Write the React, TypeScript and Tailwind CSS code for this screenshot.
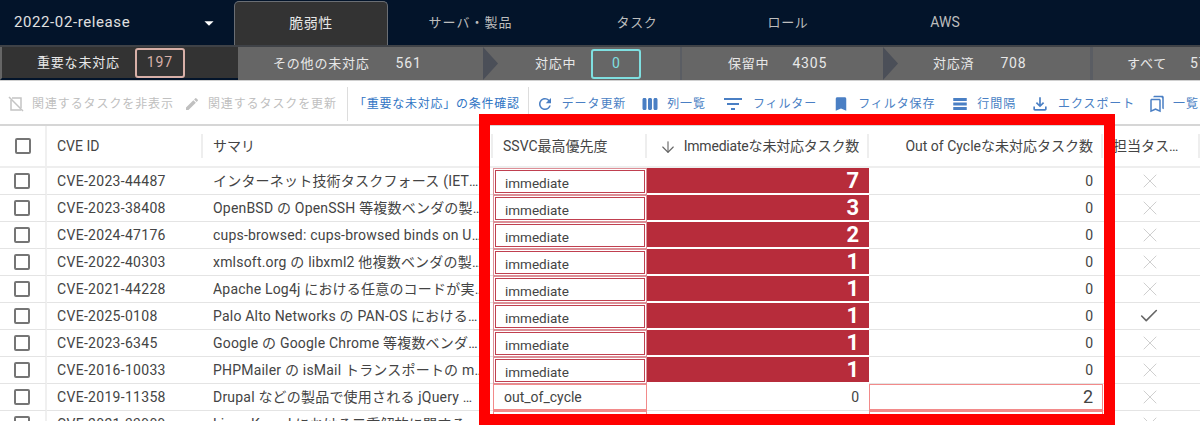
import type { ReactNode } from 'react';
import { ArrowDown, Check, X } from 'lucide-react';
import {
  MdArrowDropDown,
  MdBookmark,
  MdEdit,
  MdFilterList,
  MdOutlineBookmarks,
  MdOutlineFileDownload,
  MdRefresh,
  MdTableRows,
  MdViewWeek,
} from 'react-icons/md';

interface Row {
  id: string;
  summary: string;
  ssvc: string;
  immediate: number;
  outOfCycle: number;
  assigned?: boolean;
}

const ROWS: Row[] = [
  { id: 'CVE-2023-44487', summary: 'インターネット技術タスクフォース (IETF) の HTTP/2', ssvc: 'immediate', immediate: 7, outOfCycle: 0 },
  { id: 'CVE-2023-38408', summary: 'OpenBSD の OpenSSH 等複数ベンダの製品における', ssvc: 'immediate', immediate: 3, outOfCycle: 0 },
  { id: 'CVE-2024-47176', summary: 'cups-browsed: cups-browsed binds on UDP INADDR_ANY', ssvc: 'immediate', immediate: 2, outOfCycle: 0 },
  { id: 'CVE-2022-40303', summary: 'xmlsoft.org の libxml2 他複数ベンダの製品における', ssvc: 'immediate', immediate: 1, outOfCycle: 0 },
  { id: 'CVE-2021-44228', summary: 'Apache Log4j における任意のコードが実行される脆弱性', ssvc: 'immediate', immediate: 1, outOfCycle: 0 },
  { id: 'CVE-2025-0108', summary: 'Palo Alto Networks の PAN-OS における認証欠如の脆弱性', ssvc: 'immediate', immediate: 1, outOfCycle: 0, assigned: true },
  { id: 'CVE-2023-6345', summary: 'Google の Google Chrome 等複数ベンダの製品における', ssvc: 'immediate', immediate: 1, outOfCycle: 0 },
  { id: 'CVE-2016-10033', summary: 'PHPMailer の isMail トランスポートの mail 関数における', ssvc: 'immediate', immediate: 1, outOfCycle: 0 },
  { id: 'CVE-2019-11358', summary: 'Drupal などの製品で使用される jQuery におけるプロトタイプ', ssvc: 'out_of_cycle', immediate: 0, outOfCycle: 2 },
  { id: 'CVE-2021-33909', summary: 'Linux Kernel における二重解放に関する脆弱性', ssvc: 'out_of_cycle', immediate: 0, outOfCycle: 1 },
];

const GRID = 'grid grid-cols-[47px_156px_290px_154px_222px_234px_97px]';

function Checkbox() {
  return <div className="w-[16px] h-[16px] rounded-[2px] border-2 border-[#757575] bg-white" />;
}

function HideIcon() {
  return (
    <svg width="16" height="16" viewBox="0 0 16 16" fill="none" stroke="#c4c4c4" strokeWidth="1.5">
      <path d="M4 2h9v10M13 14H3V4" />
      <path d="M1 1l14 14" />
    </svg>
  );
}

function Arrow() {
  return (
    <div className="w-[16px] h-full shrink-0 bg-[#666666]">
      <svg width="16" height="33" viewBox="0 0 16 33" className="block">
        <path d="M0 0l15 16.5L0 33z" fill="#4b4f58" />
      </svg>
    </div>
  );
}

function Tool({ icon, label, disabled, gap }: { icon: ReactNode; label: string; disabled?: boolean; gap: string }) {
  return (
    <div className={`flex items-center shrink-0 whitespace-nowrap ${gap} ${disabled ? 'text-[#c0c0c0]' : 'text-[#4a7fc4]'}`}>
      <span className="w-[16px] flex justify-center">{icon}</span>
      <span className="text-[12px] tracking-[0.9px]">{label}</span>
    </div>
  );
}

function HeaderCell({ children, className = '' }: { children: ReactNode; className?: string }) {
  return (
    <div className={`relative flex items-center pt-[1px] text-[14px] text-[#444444] whitespace-nowrap px-[10px] ${className}`}>
      {children}
      <span className="absolute right-0 top-[8px] h-[24px] w-[2px] bg-[#eeeeee]" />
    </div>
  );
}

export default function App() {
  return (
    <div className="relative w-[1200px] h-[426px] overflow-hidden bg-white font-['Roboto','Noto_Sans_CJK_JP',sans-serif]">
      {/* Top nav */}
      <div className="h-[45px] bg-[#03142a] flex">
        <div className="w-[234px] flex items-center pl-[14px] pr-[14px] justify-between text-[#e0e0e0] text-[15px] tracking-[0.6px]">
          2022-02-release
          <MdArrowDropDown size={22} className="text-white shrink-0" />
        </div>
        <div className="w-[154px] mt-[1px] rounded-t-[5px] border border-b-0 border-[#6a6e74] bg-[#333333] text-[#e6e6e6] text-[14px] tracking-[0.5px] flex items-center justify-center">脆弱性</div>
        <div className="w-[165px] text-[#bdbdbd] text-[13px] tracking-[1px] flex items-center justify-center">サーバ・製品</div>
        <div className="w-[168px] text-[#bdbdbd] text-[13px] tracking-[0.7px] flex items-center justify-center">タスク</div>
        <div className="w-[134px] text-[#bdbdbd] text-[13px] tracking-[0.7px] flex items-center justify-center">ロール</div>
        <div className="w-[180px] text-[#bdbdbd] text-[14px] flex items-center justify-center">AWS</div>
      </div>

      {/* Status steps */}
      <div className="h-[36px] flex text-[13px] tracking-[0.8px] text-[#e8e8e8] border-t-2 border-t-[#3f4247] border-b border-b-[#d0d0d0]">
        <div className="w-[238px] bg-[#333333] border-l-2 border-[#666666] border-b-2 border-b-[#03142a] flex items-center pl-[35px] gap-[15px]">
          重要な未対応
          <span className="w-[50px] h-[30px] rounded-[3px] border-2 border-[#d8b0a8] text-[#d8b0a8] text-[14px] flex items-center justify-center">197</span>
        </div>
        <div className="w-[245px] bg-[#666666] flex items-center pl-[35px] gap-[26px]">
          その他の未対応<span className="text-[14px]">561</span>
        </div>
        <Arrow />
        <div className="w-[183px] bg-[#666666] border-r-2 border-[#5a5d63] flex items-center pl-[36px] gap-[15px]">
          対応中
          <span className="w-[50px] h-[30px] rounded-[3px] border-2 border-[#7fdfe0] text-[#7fdfe0] text-[14px] flex items-center justify-center">0</span>
        </div>
        <div className="w-[201px] bg-[#666666] flex items-center pl-[46px] gap-[23px]">
          保留中<span className="text-[14px]">4305</span>
        </div>
        <Arrow />
        <div className="w-[194px] bg-[#666666] border-r-[3px] border-[#5a5d63] flex items-center pl-[34px] gap-[26px]">
          対応済<span className="text-[14px]">708</span>
        </div>
        <div className="flex-1 bg-[#666666] overflow-hidden flex items-center pl-[34px] gap-[23px] whitespace-nowrap">
          すべて<span className="text-[14px]">5771</span>
        </div>
      </div>

      {/* Toolbar */}
      <div className="h-[45px] flex items-center pl-[8px] pt-[2px] border-b-2 border-[#d6d6d6]">
        <Tool disabled gap="gap-[8px]" icon={<HideIcon />} label="関連するタスクを非表示" />
        <div className="w-[10px] shrink-0" />
        <Tool disabled gap="gap-[8px]" icon={<MdEdit size={16} className="shrink-0" />} label="関連するタスクを更新" />
        <div className="w-[1px] h-[34px] bg-[#dddddd] ml-[10px] mr-[6px] shrink-0" />
        <span className="text-[12px] tracking-[0.75px] text-[#2f74c4] whitespace-nowrap shrink-0">「重要な未対応」の条件確認</span>
        <div className="w-[1px] h-[34px] bg-[#dddddd] ml-[8px] mr-[8px] shrink-0" />
        <Tool gap="gap-[9px]" icon={<MdRefresh size={18} className="shrink-0" />} label="データ更新" />
        <div className="w-[16px] shrink-0" />
        <Tool gap="gap-[9px]" icon={<MdViewWeek size={18} className="shrink-0" />} label="列一覧" />
        <div className="w-[19px] shrink-0" />
        <Tool gap="gap-[12px]" icon={<MdFilterList size={24} className="shrink-0" />} label="フィルター" />
        <div className="w-[16px] shrink-0" />
        <Tool gap="gap-[9px]" icon={<MdBookmark size={18} className="shrink-0" />} label="フィルタ保存" />
        <div className="w-[17px] shrink-0" />
        <Tool gap="gap-[9px]" icon={<MdTableRows size={18} className="shrink-0" />} label="行間隔" />
        <div className="w-[16px] shrink-0" />
        <Tool gap="gap-[10px]" icon={<MdOutlineFileDownload size={20} className="shrink-0" />} label="エクスポート" />
        <div className="w-[14px] shrink-0" />
        <Tool gap="gap-[8px]" icon={<MdOutlineBookmarks size={18} className="shrink-0" />} label="一覧" />
      </div>

      {/* Table */}
      <div className="h-[295px] overflow-hidden">
        <div className={`${GRID} h-[42px] border-b-2 border-[#eeeeee]`}>
          <div className="relative flex items-center justify-center pr-[1px]">
            <Checkbox />
            <span className="absolute right-0 top-0 h-full w-[2px] bg-[#f0f0f0]" />
          </div>
          <HeaderCell>CVE ID</HeaderCell>
          <HeaderCell>サマリ</HeaderCell>
          <HeaderCell>SSVC最高優先度</HeaderCell>
          <HeaderCell className="justify-end">
            <ArrowDown size={18} strokeWidth={1.5} className="text-[#666666] mr-[7px] shrink-0" />
            <span className="tracking-[-0.2px]">Immediateな未対応タスク数</span>
          </HeaderCell>
          <HeaderCell className="justify-end">Out of Cycleな未対応タスク数</HeaderCell>
          <HeaderCell className="pl-[10px]"><span className="w-[74px] truncate">担当タスク数</span></HeaderCell>
        </div>

        {ROWS.map((row) => (
          <div key={row.id} className={`${GRID} grid-rows-[27px] h-[27px] text-[14px] text-[#444444]`}>
            <div className="flex items-center justify-center pr-[1px] border-b border-[#e4e4e4] border-r-2 border-r-[#f0f0f0]"><Checkbox /></div>
            <div className="flex items-center pl-[10px] tracking-[0.3px] border-b border-[#e4e4e4]">{row.id}</div>
            <div className="flex items-center pl-[10px] pr-[7px] tracking-[0.2px] border-b border-[#e4e4e4] min-w-0">
              <span className="truncate">{row.summary}</span>
            </div>
            {row.ssvc === 'immediate' ? (
              <div className="p-[1px] border border-[#dd8f97] bg-white">
                <div className="h-full border border-[#c04050] flex items-center pl-[9px] pt-[3px] text-[13.5px]">{row.ssvc}</div>
              </div>
            ) : (
              <div className="border border-b-2 border-[#f28a8a] flex items-center pl-[10px]">{row.ssvc}</div>
            )}
            {row.immediate > 0 ? (
              <div className="pb-[2px]">
                <div className="h-full bg-[#b72c3b] text-white text-[22px] leading-none font-bold flex items-center justify-end pr-[10px]">{row.immediate}</div>
              </div>
            ) : (
              <div className="border-b border-[#e4e4e4] flex items-center justify-end pr-[10px]">{row.immediate}</div>
            )}
            {row.outOfCycle > 0 ? (
              <div className="border border-b-2 border-[#f28a8a] text-[18px] leading-none flex items-center justify-end pr-[9px]">{row.outOfCycle}</div>
            ) : (
              <div className="border-b border-[#e4e4e4] flex items-center justify-end pr-[10px]">{row.outOfCycle}</div>
            )}
            <div className="border-b border-[#e4e4e4] flex items-center pl-[35px]">
              {row.assigned ? (
                <Check size={22} strokeWidth={1.75} className="text-[#666666] shrink-0" />
              ) : (
                <X size={24} strokeWidth={1} className="text-[#cfcfcf] shrink-0" />
              )}
            </div>
          </div>
        ))}
      </div>

      {/* Red highlight drawn over the screenshot */}
      <div className="absolute left-[479px] top-[114px] w-[636px] h-[311px] border-[11px] border-[#ff0000] pointer-events-none" />
    </div>
  );
}
